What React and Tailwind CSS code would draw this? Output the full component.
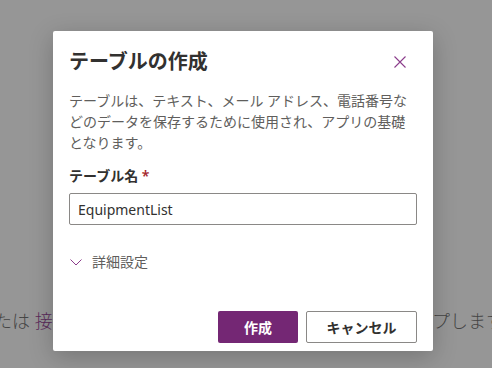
export default function App() {
  const font = { fontFamily: '"Noto Sans", "Noto Sans CJK JP", sans-serif' };
  return (
    <div className="relative h-[368px] w-full overflow-hidden bg-[#969696]" style={font}>
      <div className="flex h-full items-start justify-between pt-[308px] text-[18px] font-light text-[#444444]">
        <span className="-ml-[24px]">
          または <span className="text-[#5a2a5a]">接続</span>
        </span>
        <span className="-mr-[12px]">ドロップします</span>
      </div>

      <div className="absolute left-[53px] top-[31px] flex h-[320px] w-[380px] flex-col rounded-[2px] bg-white px-4 pt-[17px] shadow-[0_6px_24px_rgba(0,0,0,0.22)]">
        <div className="flex items-center justify-between">
          <h2 className="text-[20px] font-semibold leading-[28px] text-[#323130]">テーブルの作成</h2>
          <svg width="12" height="12" viewBox="0 0 12 12" className="mr-[11px]">
            <path d="M0.5 0.5 L11.5 11.5 M11.5 0.5 L0.5 11.5" stroke="#8b3c8b" strokeWidth="1.1" fill="none" />
          </svg>
        </div>

        <p className="mt-[14px] text-[14px] leading-[21px] text-[#605e5c]">
          テーブルは、テキスト、メール アドレス、電話番号などのデータを保存するために使用され、アプリの基礎となります。
        </p>

        <label className="mt-[13px] text-[14px] font-semibold leading-[20px] text-[#323130]">
          テーブル名 <span className="text-[#a4262c]">*</span>
        </label>
        <div className="mt-[7px] flex h-[32px] items-center rounded-[2px] border border-[#8a8886] px-2 text-[14px] text-[#323130]">
          EquipmentList
        </div>

        <div className="mt-[27px] flex items-center gap-[10px] text-[14px] leading-[20px] text-[#605e5c]">
          <svg width="12" height="7" viewBox="0 0 12 7" className="ml-[1px]">
            <path d="M0.5 0.5 L6 6 L11.5 0.5" stroke="#8b3c8b" strokeWidth="1" fill="none" />
          </svg>
          <span>詳細設定</span>
        </div>

        <div className="mt-auto mb-[8px] flex justify-end gap-2">
          <button className="h-[32px] w-[80px] rounded-[2px] bg-[#742774] text-[14px] font-semibold text-white">作成</button>
          <button className="h-[32px] w-[111px] rounded-[2px] border border-[#8a8886] bg-white text-[14px] font-semibold text-[#323130]">キャンセル</button>
        </div>
      </div>
    </div>
  );
}
